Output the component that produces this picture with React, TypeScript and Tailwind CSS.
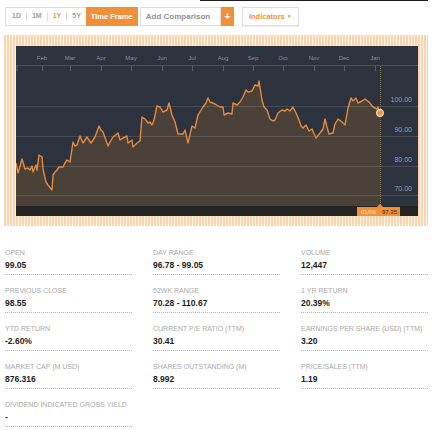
import React from "react";

const pts: [number, number][] = [
  [16,163],[18,173],[22,159],[25,169],[28,168],[30,170],[32,166],[33,172],[36,165],[37,170],[39,155],[42,157],[43,169],[46,182],[48,185],[52,190],[53,175],[55,172],[57,170],[59,167],[63,167],[65,163],[67,160],[70,162],[73,142],[75,146],[77,145],[80,136],[83,143],[87,137],[91,143],[95,137],[99,126],[101,130],[103,132],[108,146],[110,142],[113,137],[118,133],[120,140],[123,138],[127,136],[128,143],[132,140],[133,147],[137,143],[140,141],[142,117],[145,119],[148,123],[150,122],[152,125],[154,120],[157,106],[160,107],[163,112],[167,110],[169,103],[172,115],[175,122],[178,134],[183,134],[185,130],[188,143],[192,126],[195,128],[198,115],[203,107],[206,103],[208,98],[210,102],[215,104],[220,107],[223,107],[224,115],[228,113],[232,114],[233,103],[237,105],[240,102],[243,97],[246,90],[248,92],[252,91],[255,85],[258,86],[259,81],[262,100],[264,107],[267,110],[270,119],[273,121],[275,120],[278,113],[282,110],[285,111],[287,109],[290,111],[293,107],[296,113],[299,120],[301,126],[303,128],[306,125],[309,131],[312,129],[316,138],[320,133],[323,129],[325,119],[327,127],[329,134],[333,133],[335,124],[338,119],[342,122],[345,125],[348,108],[351,98],[353,101],[356,98],[358,103],[362,101],[365,99],[369,102],[373,107],[377,109],[378,107],[380,113]
];

const linePath = pts.map((p, i) => `${i === 0 ? "M" : "L"}${p[0]} ${p[1]}`).join(" ");
const fillPath = `${linePath} L380 206 L16 206 Z`;

const months: [string, number][] = [
  ["Feb", 42],["Mar", 70],["Apr", 101],["May", 131],["Jun", 162],["Jul", 192],
  ["Aug", 223],["Sep", 253],["Oct", 283],["Nov", 314],["Dec", 344],["Jan", 375],
];

const grid: [number, string][] = [
  [106, "100.00"],[136, "90.00"],[166, "80.00"],[195, "70.00"],
];

function Chart() {
  return (
    <svg width="402" height="170" viewBox="16 46 402 170" className="block">
      <rect x="16" y="46" width="402" height="170" fill="#2c333f" />
      <line x1="16" y1="65.5" x2="418" y2="65.5" stroke="#4b5361" strokeWidth="1" />
      <line x1="17" y1="65" x2="17" y2="71" stroke="#5a6270" strokeWidth="1" />
      {months.map(([m, x]) => (
        <g key={m}>
          <text x={x} y="60" textAnchor="middle" fontSize="6" fill="#8b929c" fontFamily="'Liberation Sans', Arial, sans-serif">{m}</text>
          <line x1={x + 0.5} y1="65" x2={x + 0.5} y2="71" stroke="#5a6270" strokeWidth="1" />
        </g>
      ))}
      <path d={fillPath} fill="#4a4139" />
      {grid.map(([y, l]) => (
        <g key={l}>
          <line x1="16" y1={y + 0.5} x2="418" y2={y + 0.5} stroke="rgba(255,255,255,0.13)" strokeWidth="1" />
          <text x="412" y={y - 4} textAnchor="end" fontSize="7" fill="#9aa1ab" fontFamily="'Liberation Sans', Arial, sans-serif">{l}</text>
        </g>
      ))}
      <rect x="16" y="206" width="402" height="10" fill="#242424" />
      <line x1="380.5" y1="66" x2="380.5" y2="206" stroke="#8a7462" strokeWidth="1" strokeDasharray="1 1" />
      <path d={linePath} fill="none" stroke="#e8893a" strokeWidth="1.4" strokeLinejoin="round" />
      <circle cx="380" cy="113" r="3.3" fill="#f0913a" stroke="#f3e4d4" strokeWidth="1.2" />
      <polygon points="377,207 380,204 383,207" fill="#f0913a" />
      <rect x="357" y="207" width="43" height="9" fill="#f0913a" />
      <text x="361" y="214" fontSize="6" fill="#fde3c8" fontFamily="'Liberation Sans', Arial, sans-serif">01/06</text>
      <text x="382" y="214" fontSize="6" fill="#3a2818" fontFamily="'Liberation Sans', Arial, sans-serif">97.35</text>
    </svg>
  );
}

const stats: [string, string][] = [
  ["OPEN", "99.05"],
  ["DAY RANGE", "96.78 - 99.05"],
  ["VOLUME", "12,447"],
  ["PREVIOUS CLOSE", "98.55"],
  ["52WK RANGE", "70.28 - 110.67"],
  ["1 YR RETURN", "20.39%"],
  ["YTD RETURN", "-2.60%"],
  ["CURRENT P/E RATIO (TTM)", "30.41"],
  ["EARNINGS PER SHARE (USD) (TTM)", "3.20"],
  ["MARKET CAP (M USD)", "876.316"],
  ["SHARES OUTSTANDING (M)", "8.992"],
  ["PRICE/SALES (TTM)", "1.19"],
  ["DIVIDEND INDICATED GROSS YIELD", "-"],
];

export default function App() {
  return (
    <div className="w-[436px] h-[430px] bg-white overflow-hidden font-['Liberation_Sans',Arial,sans-serif]">
      <div className="ml-[200px] w-[228px] h-px bg-[#1e1e1e]" />
      <div className="mt-[6px] ml-[5px] flex items-stretch h-[19px]">
        <div className="flex items-center border border-[#dcdcdc] border-r-0 pl-[6px] pr-[5px] text-[7px] font-bold text-[#a0a0a0]">
          <span>1D</span>
          <span className="mx-[5px] w-px h-[8px] bg-[#dddddd]" />
          <span>1M</span>
          <span className="mx-[5px] w-px h-[8px] bg-[#dddddd]" />
          <span className="text-[#f0913a]">1Y</span>
          <span className="mx-[5px] w-px h-[8px] bg-[#dddddd]" />
          <span>5Y</span>
        </div>
        <div className="w-[52px] bg-[#f0913a] text-white text-[7.5px] font-bold flex items-center justify-center">Time Frame</div>
        <div className="ml-[2px] w-[81px] border border-[#dcdcdc] flex items-center pl-[5px] text-[8px] font-bold text-[#8f8f8f]">Add Comparison</div>
        <div className="w-[13px] bg-[#f0913a] text-white text-[10px] font-bold flex items-center justify-center leading-none">+</div>
        <div className="ml-[8px] w-[57px] border border-[#dcdcdc] shadow-[0_1px_1px_rgba(0,0,0,0.06)] flex items-center justify-center gap-[2px] text-[7.5px] font-bold text-[#f0913a]">
          <span>Indicators</span>
          <span className="text-[5px]">▼</span>
        </div>
      </div>
      <div className="mt-[9px] ml-[4px] w-[424px] h-[191px] pt-[11px] pl-[12px] bg-[repeating-linear-gradient(90deg,#fbd4ad_0px,#fbd4ad_2px,#fff6ec_2px,#fff6ec_3px)]">
        <Chart />
      </div>
      <div className="mt-[22px] pl-[5px] grid grid-cols-[127px_127px_127px] gap-x-[21px]">
        {stats.map(([l, v]) => (
          <div key={l} className="mb-[11px]">
            <div className="text-[7px] leading-[9px] text-[#a8a8a8] whitespace-nowrap">{l}</div>
            <div className="mt-[3px] text-[8.5px] leading-[11px] font-bold text-[#1e1e1e]">{v}</div>
            <div className="mt-[3px] border-b border-dotted border-[#b5b5b5]" />
          </div>
        ))}
      </div>
    </div>
  );
}
